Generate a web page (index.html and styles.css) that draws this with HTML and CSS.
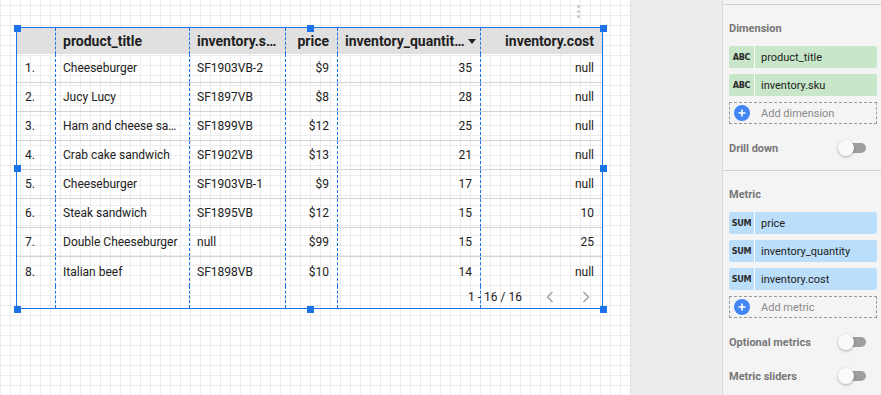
FILE: index.html
```html
<!DOCTYPE html>
<html lang="en">
  <head>
    <meta charset="UTF-8" />
    <meta name="viewport" content="width=device-width, initial-scale=1.0" />
    <title>Report editor - Table</title>
    <link rel="stylesheet" href="styles.css">
  </head>
  <body>
    <div class="editor">
      <!-- Report canvas -->
      <div class="canvas">
        <div class="chart">
          <div class="chart-menu"><span></span><span></span><span></span></div>

          <div class="table">
            <div class="row head">
              <div class="cell"></div>
              <div class="cell">product_title</div>
              <div class="cell">inventory.s…</div>
              <div class="cell num">price</div>
              <div class="cell sorted">inventory_quantit… <span class="sort-arrow"></span></div>
              <div class="cell num">inventory.cost</div>
            </div>
            <div class="row">
              <div class="cell">1.</div>
              <div class="cell">Cheeseburger</div>
              <div class="cell">SF1903VB-2</div>
              <div class="cell num">$9</div>
              <div class="cell num">35</div>
              <div class="cell num">null</div>
            </div>
            <div class="row">
              <div class="cell">2.</div>
              <div class="cell">Jucy Lucy</div>
              <div class="cell">SF1897VB</div>
              <div class="cell num">$8</div>
              <div class="cell num">28</div>
              <div class="cell num">null</div>
            </div>
            <div class="row">
              <div class="cell">3.</div>
              <div class="cell">Ham and cheese sa…</div>
              <div class="cell">SF1899VB</div>
              <div class="cell num">$12</div>
              <div class="cell num">25</div>
              <div class="cell num">null</div>
            </div>
            <div class="row">
              <div class="cell">4.</div>
              <div class="cell">Crab cake sandwich</div>
              <div class="cell">SF1902VB</div>
              <div class="cell num">$13</div>
              <div class="cell num">21</div>
              <div class="cell num">null</div>
            </div>
            <div class="row">
              <div class="cell">5.</div>
              <div class="cell">Cheeseburger</div>
              <div class="cell">SF1903VB-1</div>
              <div class="cell num">$9</div>
              <div class="cell num">17</div>
              <div class="cell num">null</div>
            </div>
            <div class="row">
              <div class="cell">6.</div>
              <div class="cell">Steak sandwich</div>
              <div class="cell">SF1895VB</div>
              <div class="cell num">$12</div>
              <div class="cell num">15</div>
              <div class="cell num">10</div>
            </div>
            <div class="row">
              <div class="cell">7.</div>
              <div class="cell">Double Cheeseburger</div>
              <div class="cell">null</div>
              <div class="cell num">$99</div>
              <div class="cell num">15</div>
              <div class="cell num">25</div>
            </div>
            <div class="row last">
              <div class="cell">8.</div>
              <div class="cell">Italian beef</div>
              <div class="cell">SF1898VB</div>
              <div class="cell num">$10</div>
              <div class="cell num">14</div>
              <div class="cell num">null</div>
            </div>
            <div class="row foot">
              <div class="cell"></div>
              <div class="cell"></div>
              <div class="cell"></div>
              <div class="cell"></div>
              <div class="cell"></div>
              <div class="cell"></div>
            </div>
          </div>

          <!-- Pagination sits over the footer row -->
          <div class="pager">
            <span class="pager-text">1 - 16 / 16</span>
            <span class="pager-btn">
              <svg width="8" height="12" viewBox="0 0 8 12"><polyline points="6.5,1 1.5,6 6.5,11" /></svg>
            </span>
            <span class="pager-btn">
              <svg width="8" height="12" viewBox="0 0 8 12"><polyline points="1.5,1 6.5,6 1.5,11" /></svg>
            </span>
          </div>

          <!-- Selection handles -->
          <span class="handle h-tl"></span>
          <span class="handle h-tm"></span>
          <span class="handle h-tr"></span>
          <span class="handle h-ml"></span>
          <span class="handle h-mr"></span>
          <span class="handle h-bl"></span>
          <span class="handle h-bm"></span>
          <span class="handle h-br"></span>
        </div>
      </div>

      <div class="gutter"></div>

      <!-- Properties panel -->
      <aside class="panel">
        <div class="panel-top"></div>

        <section class="section">
          <div class="label">Dimension</div>
          <div class="chips">
            <div class="chip dim"><span class="type">ABC</span><span class="name">product_title</span></div>
            <div class="chip dim"><span class="type">ABC</span><span class="name">inventory.sku</span></div>
            <div class="chip add">
              <span class="type">
                <svg width="16" height="16" viewBox="0 0 16 16"><circle cx="8" cy="8" r="8" fill="#4285f4" /><path d="M8 4.5v7M4.5 8h7" stroke="#fff" stroke-width="1.6" /></svg>
              </span>
              <span class="name">Add dimension</span>
            </div>
          </div>
          <div class="option"><span>Drill down</span><span class="toggle"></span></div>
        </section>

        <section class="section">
          <div class="label">Metric</div>
          <div class="chips">
            <div class="chip metric"><span class="type">SUM</span><span class="name">price</span></div>
            <div class="chip metric"><span class="type">SUM</span><span class="name">inventory_quantity</span></div>
            <div class="chip metric"><span class="type">SUM</span><span class="name">inventory.cost</span></div>
            <div class="chip add">
              <span class="type">
                <svg width="16" height="16" viewBox="0 0 16 16"><circle cx="8" cy="8" r="8" fill="#4285f4" /><path d="M8 4.5v7M4.5 8h7" stroke="#fff" stroke-width="1.6" /></svg>
              </span>
              <span class="name">Add metric</span>
            </div>
          </div>
          <div class="option"><span>Optional metrics</span><span class="toggle"></span></div>
          <div class="option"><span>Metric sliders</span><span class="toggle"></span></div>
        </section>
      </aside>
    </div>
  </body>
</html>
```

FILE: styles.css
```css
/* General */
body {
  margin: 0;
  padding: 0;
  font-family: Roboto, "Liberation Sans", sans-serif;
  color: #212121;
  overflow: hidden;
}

.editor {
  display: flex;
  height: 395px;
}

/* Canvas with grid */
.canvas {
  width: 630px;
  flex-shrink: 0;
  padding: 27px 0 0 16px;
  box-sizing: border-box;
  background-color: #fff;
  background-image:
    linear-gradient(to right, #ececec 1px, transparent 1px),
    linear-gradient(to bottom, #ececec 1px, transparent 1px);
  background-size: 10px 10px;
  background-position: 0 5px;
}

.gutter {
  width: 92px;
  flex-shrink: 0;
  background-color: #ececec;
  border-left: 1px solid #e2e2e2;
  box-sizing: border-box;
}

/* Table chart */
.chart {
  position: relative;
  width: 587px;
  border: 1px solid #1a73e8;
  box-sizing: border-box;
}

.chart-menu {
  position: absolute;
  top: -23px;
  left: 560px;
  display: flex;
  flex-direction: column;
  gap: 2px;
}

.chart-menu span {
  width: 3px;
  height: 3px;
  border-radius: 50%;
  background-color: #c6c6c6;
}

.row {
  display: grid;
  grid-template-columns: 38px 134px 96px 52px 143px 122px;
  height: 29px;
  border-bottom: 1px solid #d3d3d3;
  box-sizing: border-box;
  font-size: 12px;
}

.row.last {
  border-bottom: none;
}

.row.head {
  height: 26px;
  border-bottom: none;
  background-color: #e0e0e0;
  font-size: 14px;
  font-weight: bold;
  color: #1f1f1f;
}

.row.foot {
  height: 22px;
  border-bottom: none;
}

.cell {
  display: flex;
  align-items: center;
  padding: 0 8px;
  white-space: nowrap;
  overflow: hidden;
  box-sizing: border-box;
  border-left: 1px dashed #1a73e8;
}

.cell:first-child {
  border-left: none;
}

.cell:not(:first-child) {
  padding-left: 7px;
}

.cell.num {
  justify-content: flex-end;
}

.cell.sorted {
  padding-right: 4px;
}

.sort-arrow {
  margin-left: auto;
  width: 0;
  height: 0;
  border-left: 4px solid transparent;
  border-right: 4px solid transparent;
  border-top: 5px solid #222;
}

/* Pagination */
.pager {
  position: absolute;
  right: 4px;
  bottom: 0;
  height: 22px;
  display: flex;
  align-items: center;
  font-size: 12px;
}

.pager-text {
  margin-right: 16px;
}

.pager-btn {
  width: 24px;
  height: 22px;
  display: flex;
  align-items: center;
  justify-content: center;
}

.pager-btn + .pager-btn {
  margin-left: 12px;
}

.pager-btn polyline {
  fill: none;
  stroke: #a0a0a0;
  stroke-width: 1.5;
}

/* Selection handles */
.handle {
  position: absolute;
  width: 7px;
  height: 7px;
  background-color: #1a73e8;
}

.h-tl { top: -3px; left: -3px; }
.h-tm { top: -3px; left: calc(50% - 3px); }
.h-tr { top: -3px; right: -5px; }
.h-ml { top: calc(50% - 3px); left: -3px; }
.h-mr { top: calc(50% - 3px); right: -5px; }
.h-bl { bottom: -5px; left: -3px; }
.h-bm { bottom: -5px; left: calc(50% - 3px); }
.h-br { bottom: -5px; right: -5px; }

/* Properties panel */
.panel {
  flex: 1;
  background-color: #f4f4f4;
  border-left: 1px solid #dadada;
}

.panel-top {
  height: 4px;
  border-bottom: 1px solid #d0d0d0;
}

.section {
  padding: 15px 4px 10px 6px;
  border-bottom: 1px solid #d0d0d0;
}

.label {
  height: 14px;
  line-height: 17px;
  font-size: 11px;
  font-weight: bold;
  color: #777;
}

.chips {
  display: flex;
  flex-direction: column;
  gap: 6px;
  margin-top: 12px;
}

.chip {
  display: flex;
  height: 22px;
  border-radius: 2px;
  font-size: 11px;
  box-sizing: border-box;
}

.chip .type {
  width: 25px;
  display: flex;
  align-items: center;
  justify-content: center;
  border-right: 1px solid #fff;
  font-family: "DejaVu Sans Condensed", "DejaVu Sans", sans-serif;
  font-size: 9px;
  font-weight: bold;
  letter-spacing: -0.3px;
  color: #2a2a2a;
}

.chip .name {
  display: flex;
  align-items: center;
  padding-left: 6px;
}

.chip.dim {
  background-color: #c8e6c9;
}

.chip.metric {
  background-color: #bbdefb;
}

.chip.add {
  border: 1px dashed #9a9a9a;
  border-radius: 0;
  color: #8a8a8a;
}

.chip.add .type {
  width: 24px;
  border-right: none;
}

.chip.add .name {
  padding-left: 7px;
}

.option {
  display: flex;
  align-items: center;
  justify-content: space-between;
  height: 24px;
  margin-top: 12px;
  font-size: 11px;
  font-weight: bold;
  color: #777;
}

.option + .option {
  margin-top: 10px;
}

/* Toggle switch */
.toggle {
  position: relative;
  width: 28px;
  height: 16px;
  margin-right: 11px;
}

.toggle::before {
  content: "";
  position: absolute;
  top: 3px;
  right: 0;
  width: 21px;
  height: 10px;
  border-radius: 5px;
  background-color: #9e9e9e;
}

.toggle::after {
  content: "";
  position: absolute;
  top: 0;
  left: 0;
  width: 16px;
  height: 16px;
  border-radius: 50%;
  background-color: #fafafa;
  box-shadow: 0 1px 3px rgba(0, 0, 0, 0.3);
}
```
